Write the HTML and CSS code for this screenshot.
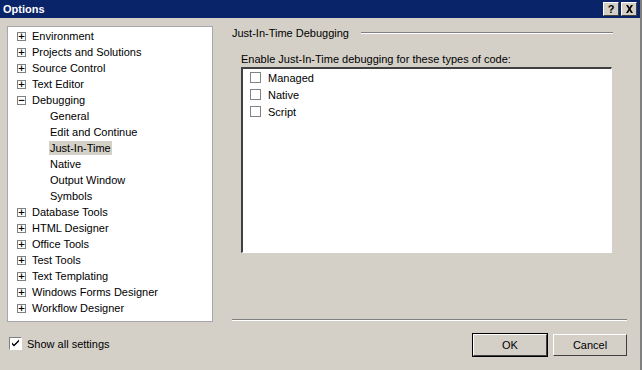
FILE: index.html
```html
<!DOCTYPE html>
<html lang="en">
<head>
    <meta charset="UTF-8">
    <title>Options</title>
    <link rel="stylesheet" href="styles.css">
</head>
<body>
    <div class="window">
        <div class="titlebar">
            <span class="title">Options</span>
            <div class="caption-buttons">
                <span class="cap-btn">?</span>
                <span class="cap-btn close">
                    <svg width="9" height="8" viewBox="0 0 9 8"><path d="M1 0h2l1.5 2.5L6 0h2L5.5 4 8 8H6L4.5 5.5 3 8H1l2.5-4z" fill="#000"/></svg>
                </span>
            </div>
        </div>

        <div class="main">
            <ul class="tree">
                <li class="node"><span class="expander">+</span>Environment</li>
                <li class="node"><span class="expander">+</span>Projects and Solutions</li>
                <li class="node"><span class="expander">+</span>Source Control</li>
                <li class="node"><span class="expander">+</span>Text Editor</li>
                <li class="node"><span class="expander">&minus;</span>Debugging</li>
                <li class="leaf">General</li>
                <li class="leaf">Edit and Continue</li>
                <li class="leaf"><span class="selected">Just-In-Time</span></li>
                <li class="leaf">Native</li>
                <li class="leaf">Output Window</li>
                <li class="leaf">Symbols</li>
                <li class="node"><span class="expander">+</span>Database Tools</li>
                <li class="node"><span class="expander">+</span>HTML Designer</li>
                <li class="node"><span class="expander">+</span>Office Tools</li>
                <li class="node"><span class="expander">+</span>Test Tools</li>
                <li class="node"><span class="expander">+</span>Text Templating</li>
                <li class="node"><span class="expander">+</span>Windows Forms Designer</li>
                <li class="node"><span class="expander">+</span>Workflow Designer</li>
            </ul>

            <div class="page">
                <div class="page-header">
                    <span>Just-In-Time Debugging</span>
                    <div class="etched"></div>
                </div>
                <div class="page-label">Enable Just-In-Time debugging for these types of code:</div>
                <div class="checklist">
                    <label class="check-row"><span class="box"></span>Managed</label>
                    <label class="check-row"><span class="box"></span>Native</label>
                    <label class="check-row"><span class="box"></span>Script</label>
                </div>
                <div class="page-bottom">
                    <div class="etched"></div>
                </div>
            </div>
        </div>

        <div class="footer">
            <label class="show-all">
                <span class="box checked">
                    <svg width="9" height="9" viewBox="0 0 9 9"><path d="M1 3.5l2 2 5-5v2l-5 5-2-2z" fill="#000"/></svg>
                </span>Show all settings
            </label>
            <div class="buttons">
                <button class="btn default">OK</button>
                <button class="btn">Cancel</button>
            </div>
        </div>
    </div>
</body>
</html>
```

FILE: styles.css
```css
body {
    margin: 0;
    font-family: "Liberation Sans", Arial, sans-serif;
    font-size: 11px;
    color: #000;
}
.window {
    width: 640px;
    height: 370px;
    background-color: #d4d0c8;
    border-right: 2px solid #808080;
}
.titlebar {
    height: 18px;
    background-color: #0a246a;
    display: flex;
    align-items: center;
    justify-content: space-between;
    padding: 0 3px 0 3px;
}
.title {
    color: #fff;
    font-weight: bold;
    font-size: 11px;
}
.caption-buttons {
    display: flex;
    gap: 2px;
}
.cap-btn {
    width: 14px;
    height: 12px;
    background-color: #d4d0c8;
    border-top: 1px solid #fff;
    border-left: 1px solid #fff;
    border-right: 1px solid #404040;
    border-bottom: 1px solid #404040;
    display: flex;
    align-items: center;
    justify-content: center;
    font-weight: bold;
    font-size: 11px;
    line-height: 12px;
}
.main {
    display: flex;
    padding: 8px 13px 0 7px;
}
.tree {
    list-style: none;
    margin: 0;
    padding: 1px 0 0 0;
    width: 204px;
    height: 293px;
    background-color: #fff;
    border: 1px solid #a7a6aa;
}
.tree li {
    height: 16px;
    line-height: 16px;
    display: flex;
    align-items: center;
    white-space: nowrap;
}
.node {
    padding-left: 9px;
}
.leaf {
    padding-left: 42px;
}
.expander {
    width: 7px;
    height: 7px;
    border: 1px solid #808080;
    margin-right: 6px;
    display: flex;
    align-items: center;
    justify-content: center;
    font-size: 9px;
    line-height: 7px;
    font-weight: bold;
    font-family: "DejaVu Sans", sans-serif;
}
.selected {
    background-color: #d4d0c8;
    padding: 0 1px;
    margin-left: -1px;
    line-height: 14px;
}
.page {
    margin-left: 19px;
    flex: 1;
    display: flex;
    flex-direction: column;
    height: 295px;
}
.page-header {
    display: flex;
    align-items: center;
    gap: 12px;
    height: 14px;
    margin-right: 14px;
}
.etched {
    flex: 1;
    height: 0;
    border-top: 1px solid #808080;
    border-bottom: 1px solid #fff;
}
.page-label {
    margin: 12px 0 0 9px;
    line-height: 14px;
}
.checklist {
    margin: 1px 15px 0 9px;
    height: 183px;
    background-color: #fff;
    border-top: 2px solid #404040;
    border-left: 2px solid #404040;
    border-right: 1px solid #fff;
    border-bottom: 1px solid #fff;
    box-shadow: 0 0 0 1px #d4d0c8;
}
.check-row {
    display: flex;
    align-items: center;
    height: 17px;
    padding-left: 7px;
}
.box {
    width: 9px;
    height: 9px;
    border: 1px solid #848284;
    background-color: #fff;
    margin-right: 7px;
    display: flex;
    align-items: center;
    justify-content: center;
}
.page-bottom {
    margin-top: auto;
    display: flex;
}
.footer {
    display: flex;
    justify-content: space-between;
    align-items: flex-start;
    padding: 12px 13px 0 9px;
}
.show-all {
    display: flex;
    align-items: center;
    margin-top: 3px;
}
.box.checked {
    width: 11px;
    height: 11px;
    border-top: 1px solid #808080;
    border-left: 1px solid #808080;
    border-right: 1px solid #fff;
    border-bottom: 1px solid #fff;
    margin-right: 5px;
}
.buttons {
    display: flex;
    gap: 6px;
}
.btn {
    width: 74px;
    height: 22px;
    font-family: "Liberation Sans", Arial, sans-serif;
    font-size: 11px;
    background-color: #d4d0c8;
    border-top: 1px solid #fff;
    border-left: 1px solid #fff;
    border-right: 1px solid #404040;
    border-bottom: 1px solid #404040;
    padding: 0;
}
.btn.default {
    outline: 1px solid #000;
    outline-offset: 0;
}
```
